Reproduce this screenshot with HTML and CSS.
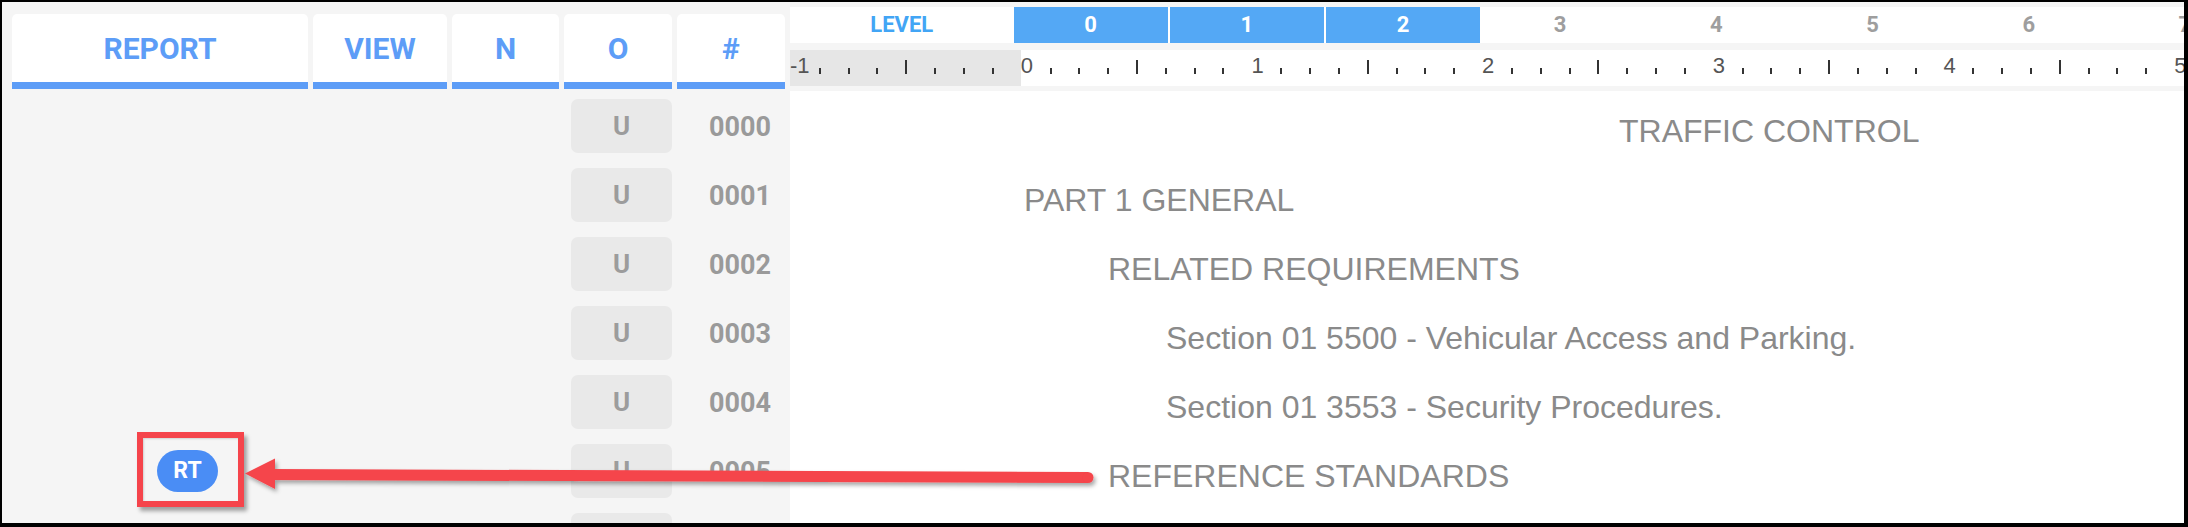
FILE: index.html
```html
<!DOCTYPE html>
<html>
<head>
<meta charset="utf-8">
<link rel="stylesheet" href="styles.css">
</head>
<body>
<div class="frame">
  <section class="left">
    <div class="grid tabs">
      <div class="tab">REPORT</div>
      <div class="tab">VIEW</div>
      <div class="tab">N</div>
      <div class="tab">O</div>
      <div class="tab">#</div>
    </div>
    <div class="rows">
      <div class="grid row"><div class="c-report"></div><div></div><div></div><div class="c-o"><span class="ubtn">U</span></div><div class="c-num">0000</div></div>
      <div class="grid row"><div class="c-report"></div><div></div><div></div><div class="c-o"><span class="ubtn">U</span></div><div class="c-num">0001</div></div>
      <div class="grid row"><div class="c-report"></div><div></div><div></div><div class="c-o"><span class="ubtn">U</span></div><div class="c-num">0002</div></div>
      <div class="grid row"><div class="c-report"></div><div></div><div></div><div class="c-o"><span class="ubtn">U</span></div><div class="c-num">0003</div></div>
      <div class="grid row"><div class="c-report"></div><div></div><div></div><div class="c-o"><span class="ubtn">U</span></div><div class="c-num">0004</div></div>
      <div class="grid row"><div class="c-report"><span class="pill">RT</span></div><div></div><div></div><div class="c-o"><span class="ubtn">U</span></div><div class="c-num">0005</div></div>
      <div class="grid row"><div class="c-report"></div><div></div><div></div><div class="c-o"><span class="ubtn">U</span></div><div class="c-num">0006</div></div>
    </div>
  </section>

  <section class="right">
    <div class="levels">
      <div class="lv-label">LEVEL</div>
      <div class="lv on">0</div>
      <div class="lv on">1</div>
      <div class="lv on">2</div>
      <div class="lv">3</div>
      <div class="lv">4</div>
      <div class="lv">5</div>
      <div class="lv">6</div>
      <div class="lv">7</div>
    </div>
    <div class="ruler">
      <div class="unit neg"><div class="sub"><span class="rl">-1</span></div><div class="sub"><i class="tk"></i></div><div class="sub"><i class="tk"></i></div><div class="sub"><i class="tk"></i></div><div class="sub"><i class="tk big"></i></div><div class="sub"><i class="tk"></i></div><div class="sub"><i class="tk"></i></div><div class="sub"><i class="tk"></i></div></div>
      <div class="unit"><div class="sub"><span class="rl">0</span></div><div class="sub"><i class="tk"></i></div><div class="sub"><i class="tk"></i></div><div class="sub"><i class="tk"></i></div><div class="sub"><i class="tk big"></i></div><div class="sub"><i class="tk"></i></div><div class="sub"><i class="tk"></i></div><div class="sub"><i class="tk"></i></div></div>
      <div class="unit"><div class="sub"><span class="rl">1</span></div><div class="sub"><i class="tk"></i></div><div class="sub"><i class="tk"></i></div><div class="sub"><i class="tk"></i></div><div class="sub"><i class="tk big"></i></div><div class="sub"><i class="tk"></i></div><div class="sub"><i class="tk"></i></div><div class="sub"><i class="tk"></i></div></div>
      <div class="unit"><div class="sub"><span class="rl">2</span></div><div class="sub"><i class="tk"></i></div><div class="sub"><i class="tk"></i></div><div class="sub"><i class="tk"></i></div><div class="sub"><i class="tk big"></i></div><div class="sub"><i class="tk"></i></div><div class="sub"><i class="tk"></i></div><div class="sub"><i class="tk"></i></div></div>
      <div class="unit"><div class="sub"><span class="rl">3</span></div><div class="sub"><i class="tk"></i></div><div class="sub"><i class="tk"></i></div><div class="sub"><i class="tk"></i></div><div class="sub"><i class="tk big"></i></div><div class="sub"><i class="tk"></i></div><div class="sub"><i class="tk"></i></div><div class="sub"><i class="tk"></i></div></div>
      <div class="unit"><div class="sub"><span class="rl">4</span></div><div class="sub"><i class="tk"></i></div><div class="sub"><i class="tk"></i></div><div class="sub"><i class="tk"></i></div><div class="sub"><i class="tk big"></i></div><div class="sub"><i class="tk"></i></div><div class="sub"><i class="tk"></i></div><div class="sub"><i class="tk"></i></div></div>
      <div class="unit"><div class="sub"><span class="rl">5</span></div><div class="sub"><i class="tk"></i></div><div class="sub"><i class="tk"></i></div><div class="sub"><i class="tk"></i></div><div class="sub"><i class="tk big"></i></div><div class="sub"><i class="tk"></i></div><div class="sub"><i class="tk"></i></div><div class="sub"><i class="tk"></i></div></div>
    </div>
    <div class="doc">
      <div class="line l0">TRAFFIC CONTROL</div>
      <div class="line l1">PART 1 GENERAL</div>
      <div class="line l2">RELATED REQUIREMENTS</div>
      <div class="line l3">Section 01 5500 - Vehicular Access and Parking.</div>
      <div class="line l3">Section 01 3553 - Security Procedures.</div>
      <div class="line l2">REFERENCE STANDARDS</div>
    </div>
  </section>

  <div class="callout"></div>
  <svg class="arrow" viewBox="2 2 2182 521" width="2182" height="521">
    <defs>
      <filter id="sh" x="-5%" y="-50%" width="110%" height="200%">
        <feDropShadow dx="2" dy="3" stdDeviation="2" flood-color="#000" flood-opacity="0.35"/>
      </filter>
    </defs>
    <g filter="url(#sh)" fill="#f5444b" stroke="none">
      <path d="M270 469 L1088 472 L1088 483 L270 480 Z" />
      <circle cx="1088" cy="477.5" r="5.5"/>
      <polygon points="245,473.5 275,458.5 275,489"/>
    </g>
  </svg>
</div>
</body>
</html>
```

FILE: styles.css
```css
* { box-sizing: border-box; }

html, body {
  margin: 0;
  padding: 0;
  background: #000;
}

body {
  width: 2188px;
  height: 527px;
  overflow: hidden;
  font-family: Roboto, "Liberation Sans", Arial, sans-serif;
}

.frame {
  position: relative;
  margin: 2px 4px 4px 2px;
  width: 2182px;
  height: 521px;
  overflow: hidden;
  background: #f5f5f5;
  display: flex;
}

/* ---------- left panel ---------- */
.left {
  width: 788px;
  flex: none;
  padding: 12px 0 0 10px;
  background: #f5f5f5;
}

.grid {
  display: grid;
  grid-template-columns: 296px 134px 107px 108px 108px;
  column-gap: 5px;
}

.tab {
  height: 75px;
  background: #fff;
  border-radius: 5px 5px 0 0;
  border-bottom: 7px solid #5d9df7;
  color: #5d9df7;
  font-weight: 700;
  font-size: 30px;
  display: flex;
  align-items: center;
  justify-content: center;
  padding-top: 1px;
}

.rows {
  margin-top: 2px;
}

.row {
  height: 69px;
  align-items: center;
}

.c-report {
  padding-left: 145px;
  display: flex;
  align-items: center;
}

.pill {
  display: inline-flex;
  align-items: center;
  justify-content: center;
  width: 61px;
  height: 42px;
  border-radius: 21px;
  background: #4a8df5;
  color: #fff;
  font-weight: 700;
  font-size: 23px;
}

.c-o {
  padding-left: 7px;
  display: flex;
  align-items: center;
}

.ubtn {
  display: flex;
  align-items: center;
  justify-content: center;
  width: 101px;
  height: 54px;
  padding-top: 1px;
  border-radius: 7px;
  background: #e9e9e9;
  color: #9c9c9c;
  font-weight: 700;
  font-size: 26px;
}

.c-num {
  padding-left: 32px;
  padding-top: 4px;
  color: #9a9a9a;
  font-weight: 700;
  font-size: 27px;
  line-height: 65px;
  height: 69px;
}

/* ---------- right panel ---------- */
.right {
  flex: 1;
  min-width: 0;
  overflow: hidden;
  padding-top: 5px;
  display: flex;
  flex-direction: column;
}

.levels {
  height: 36px;
  background: #fff;
  display: flex;
  flex: none;
  margin-bottom: 7px;
  font-weight: 700;
  font-size: 22px;
  line-height: 36px;
}

.lv-label {
  flex: none;
  width: 223.5px;
  text-align: center;
  color: #42a5f5;
}

.lv {
  flex: none;
  width: 156.2px;
  text-align: center;
  color: #9e9e9e;
}

.lv.on {
  background: #54a8f5;
  color: #fff;
  border-right: 2px solid #fff;
}

.ruler {
  height: 36px;
  background: #fff;
  display: flex;
  flex: none;
  margin-bottom: 5px;
}

.unit {
  flex: none;
  width: 230.7px;
  display: flex;
}

.unit.neg {
  background: #e6e6e6;
}

.sub {
  flex: none;
  width: 28.84px;
  height: 36px;
  display: flex;
  align-items: flex-end;
  padding-bottom: 12px;
}

.rl {
  font-family: "Liberation Sans", Arial, sans-serif;
  font-size: 22px;
  line-height: 16px;
  color: #555;
  white-space: nowrap;
}

.tk {
  display: block;
  width: 2px;
  height: 6px;
  background: #333;
}

.tk.big {
  height: 14px;
}

.doc {
  flex: 1;
  background: #fff;
  padding-top: 6px;
  font-family: "Liberation Sans", Arial, sans-serif;
  font-size: 32px;
  color: #8a8a8a;
}

.line {
  height: 69px;
  line-height: 69px;
  white-space: nowrap;
}

.l0 { padding-left: 829px; }
.l1 { padding-left: 234px; }
.l2 { padding-left: 318px; }
.l3 { padding-left: 376px; }

/* ---------- annotation overlay ---------- */
.callout {
  position: absolute;
  left: 135px;
  top: 430px;
  width: 107px;
  height: 75px;
  border: 6px solid #f5444b;
  box-shadow: 3px 4px 4px rgba(0, 0, 0, 0.35), inset 1px 1px 2px rgba(0, 0, 0, 0.15);
}

.arrow {
  position: absolute;
  left: 0;
  top: 0;
  pointer-events: none;
}
```
